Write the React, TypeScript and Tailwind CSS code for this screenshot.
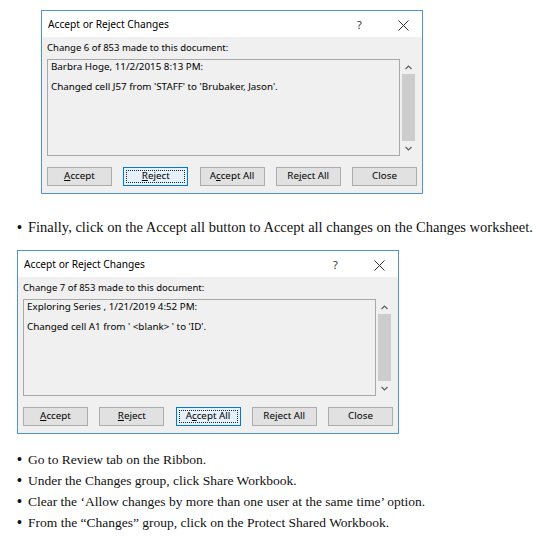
import type { ReactNode } from "react";

type ButtonSpec = { label: ReactNode; focused?: boolean };

// label with the access-key letter underlined
function Key({ before = "", k, after = "" }: { before?: string; k: string; after?: string }) {
  return (
    <span>
      {before}
      <span className="underline underline-offset-[1px]">{k}</span>
      {after}
    </span>
  );
}

function DialogButton({ label, focused }: ButtonSpec) {
  if (focused) {
    return (
      <div className="flex h-[19px] w-[65px] border border-[#0078d7] bg-[#e5f1fb] p-[2px]">
        <div className="flex flex-1 items-center justify-center border border-dotted border-[#222]">
          {label}
        </div>
      </div>
    );
  }
  return (
    <div className="flex h-[19px] w-[65px] items-center justify-center border border-[#adadad] bg-[#e1e1e1]">
      {label}
    </div>
  );
}

function ScrollBar() {
  return (
    <div className="flex w-[17px] flex-col items-center">
      <svg width="9" height="9" viewBox="0 0 9 9" className="mt-[4px]">
        <path d="M1.5 6 L4.5 3 L7.5 6" fill="none" stroke="#606060" strokeWidth="1.2" />
      </svg>
      <div className="mt-[2px] h-[67px] w-[13px] bg-[#cdcdcd]" />
      <svg width="9" height="9" viewBox="0 0 9 9" className="mt-[3px]">
        <path d="M1.5 3 L4.5 6 L7.5 3" fill="none" stroke="#606060" strokeWidth="1.2" />
      </svg>
    </div>
  );
}

function ChangesDialog({
  offset,
  counter,
  author,
  detail,
  focusedIndex,
}: {
  offset: string;
  counter: string;
  author: string;
  detail: string;
  focusedIndex: number;
}) {
  const buttons: ButtonSpec[] = [
    { label: <Key k="A" after="ccept" /> },
    { label: <Key k="R" after="eject" /> },
    { label: <Key before="A" k="c" after="cept All" /> },
    { label: <Key before="Re" k="j" after="ect All" /> },
    { label: "Close" },
  ];

  return (
    <div
      className={`${offset} flex h-[184px] w-[382px] flex-col border border-[#4f93d2] bg-[#f0f0f0] font-['Noto_Sans',sans-serif] text-[9.8px] text-black`}
    >
      <div className="flex h-[26px] items-center bg-white pl-[6px] pt-[2px] text-[10.2px]">
        <span className="flex-1">Accept or Reject Changes</span>
        <span className="w-[12px] text-[11px] text-[#333]">?</span>
        <svg width="11" height="11" viewBox="0 0 11 11" className="ml-[29px] mr-[13px]">
          <path d="M0.5 0.5 L10.5 10.5 M10.5 0.5 L0.5 10.5" stroke="#333" strokeWidth="1" />
        </svg>
      </div>
      <div className="flex flex-col px-[5px] pt-[4px]">
        <div className="text-[9.5px] leading-[14px]">{counter}</div>
        <div className="mt-[4px] flex">
          <div className="h-[97px] w-[355px] border border-[#a8a8a8] bg-[#f0f0f0] pl-[3px] leading-[14px]">
            <div>{author}</div>
            <div className="mt-[6px]">{detail}</div>
          </div>
          <ScrollBar />
        </div>
        <div className="mt-[11px] flex w-[370px] justify-between">
          {buttons.map((b, i) => (
            <DialogButton key={i} label={b.label} focused={i === focusedIndex} />
          ))}
        </div>
      </div>
    </div>
  );
}

function Bullet({ children }: { children: ReactNode }) {
  return (
    <div className="flex leading-[21px]">
      <span className="w-[11px] text-[14px] font-bold">•</span>
      <span>{children}</span>
    </div>
  );
}

export default function App() {
  return (
    <div className="h-[558px] w-[560px] overflow-hidden bg-white pt-[10px] font-['Liberation_Serif',serif] text-[#111]">
      <ChangesDialog
        offset="ml-[41px]"
        counter="Change 6 of 853 made to this document:"
        author="Barbra Hoge, 11/2/2015 8:13 PM:"
        detail="Changed cell J57 from 'STAFF' to 'Brubaker, Jason'."
        focusedIndex={1}
      />
      <div className="ml-[17px] mt-[23px] text-[14.5px]">
        <Bullet>
          Finally, click on the Accept all button to Accept all changes on the Changes worksheet.
        </Bullet>
      </div>
      <ChangesDialog
        offset="ml-[17px] mt-[12px]"
        counter="Change 7 of 853 made to this document:"
        author="Exploring Series , 1/21/2019 4:52 PM:"
        detail="Changed cell A1 from ' <blank> ' to 'ID'."
        focusedIndex={2}
      />
      <div className="ml-[17px] mt-[15px] text-[13.5px]">
        <Bullet>Go to Review tab on the Ribbon.</Bullet>
        <Bullet>Under the Changes group, click Share Workbook.</Bullet>
        <Bullet>Clear the ‘Allow changes by more than one user at the same time’ option.</Bullet>
        <Bullet>From the “Changes” group, click on the Protect Shared Workbook.</Bullet>
      </div>
    </div>
  );
}
